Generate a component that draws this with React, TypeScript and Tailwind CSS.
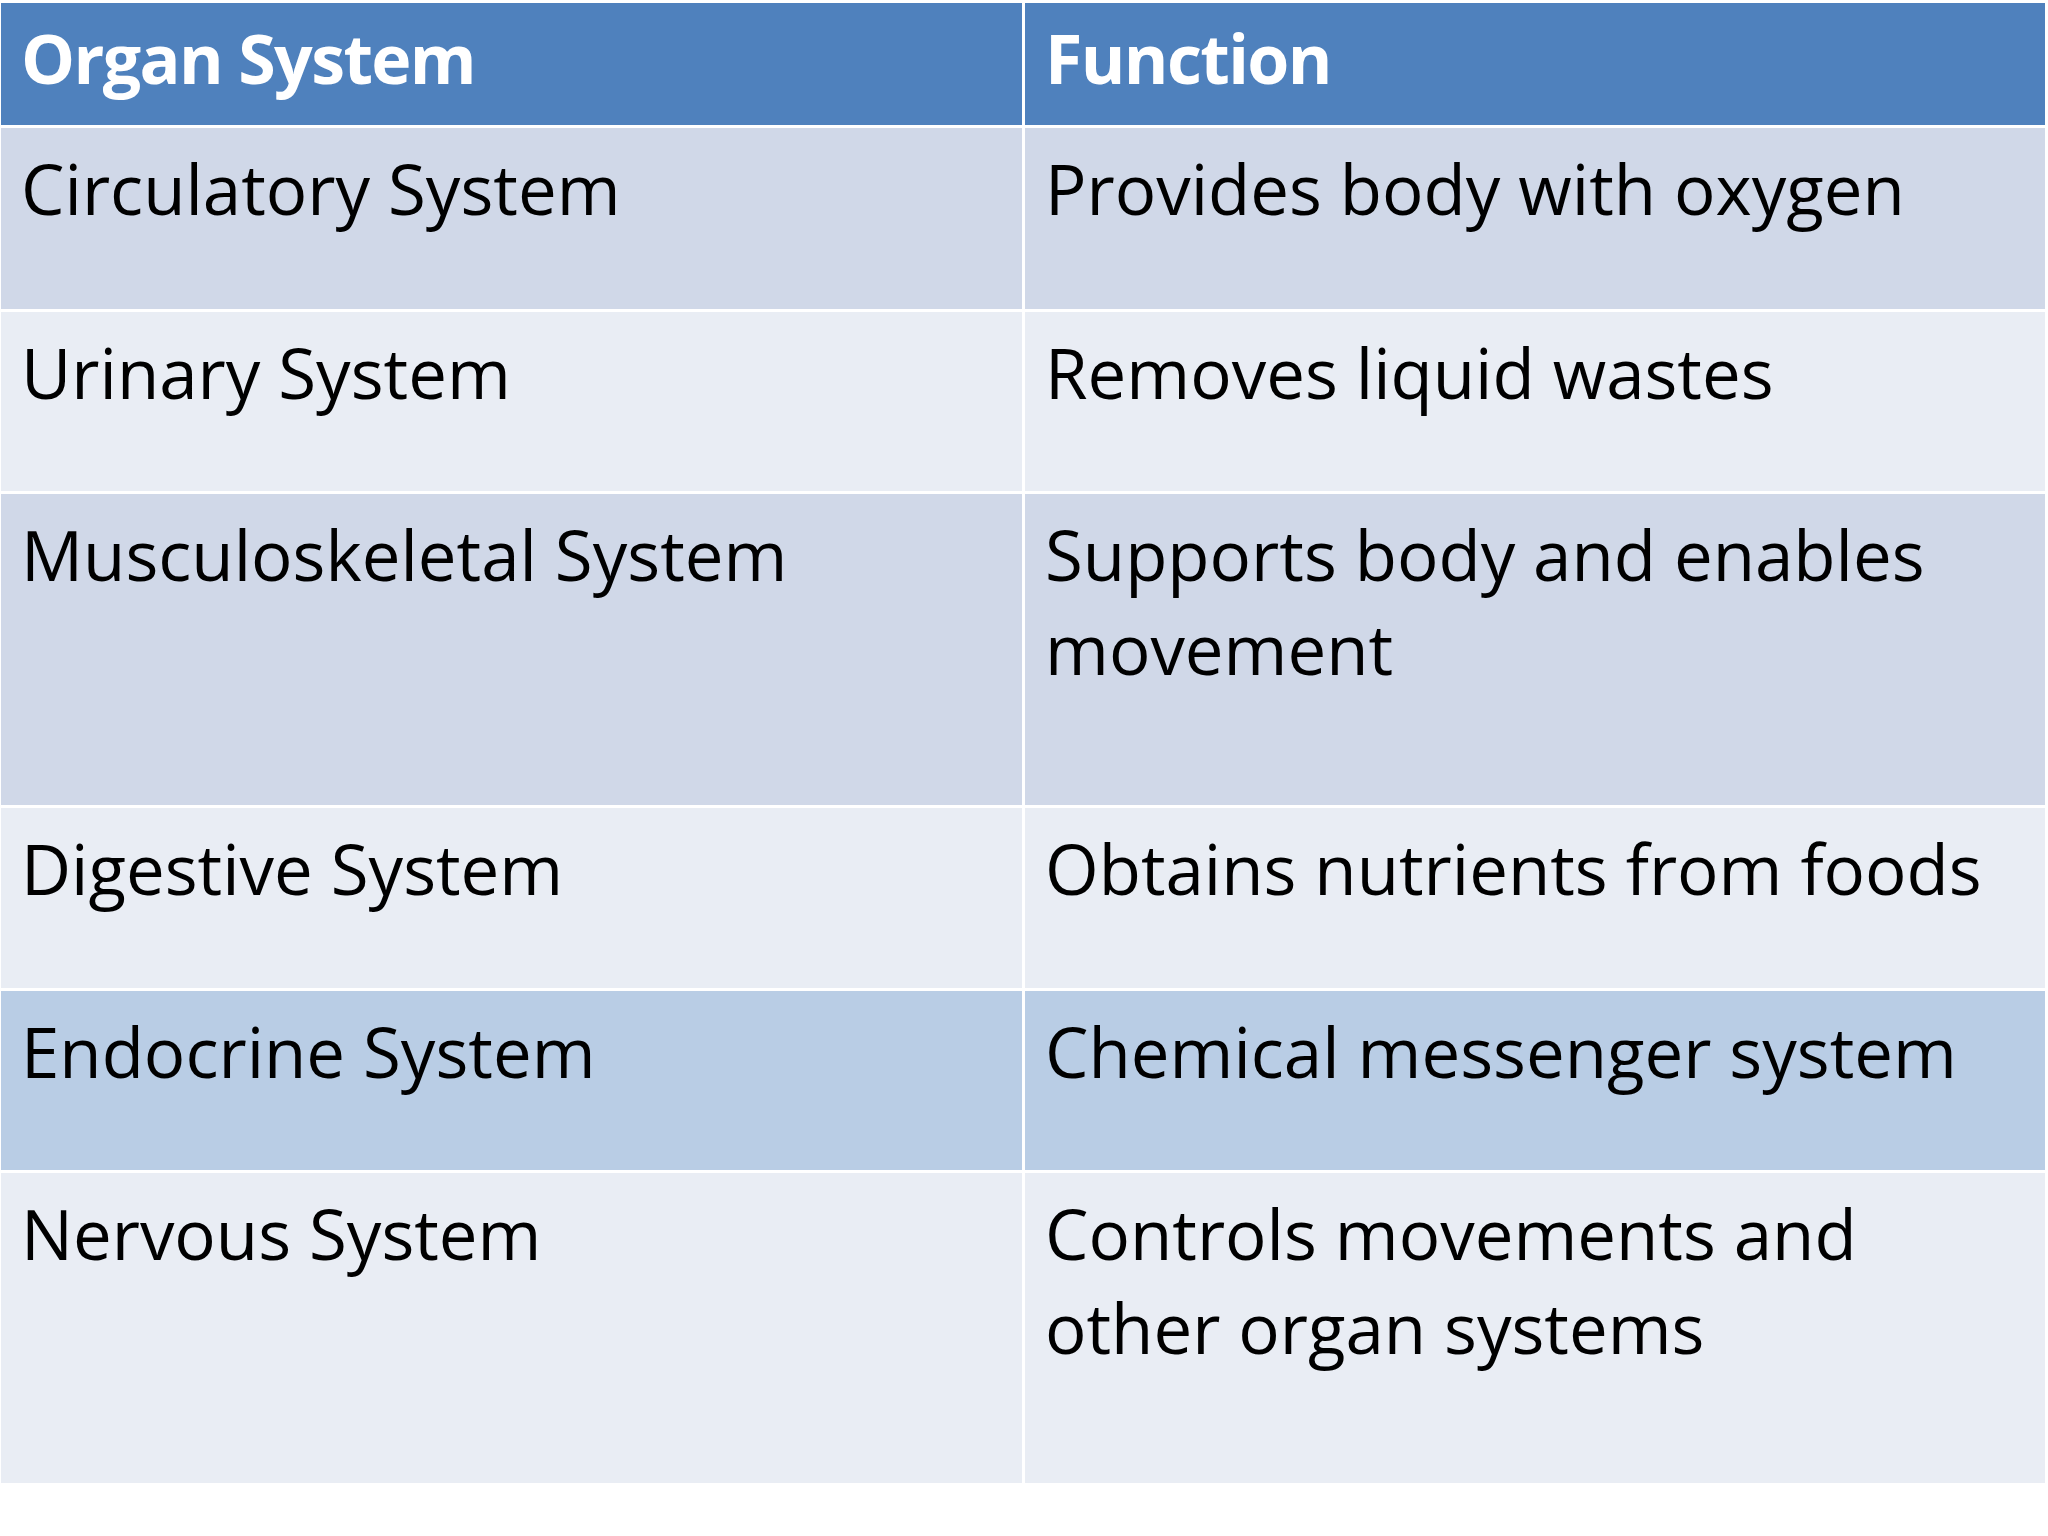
import React from "react";

type Row = { organ: string; fn: React.ReactNode; h: string; bg: string };

const rows: Row[] = [
  { organ: "Circulatory System", fn: "Provides body with oxygen", h: "h-[181px]", bg: "bg-[#d0d8e8]" },
  { organ: "Urinary System", fn: "Removes liquid wastes", h: "h-[179px]", bg: "bg-[#e9edf4]" },
  {
    organ: "Musculoskeletal System",
    fn: (
      <>
        Supports body and enables
        <br />
        movement
      </>
    ),
    h: "h-[311px]",
    bg: "bg-[#d0d8e8]",
  },
  { organ: "Digestive System", fn: "Obtains nutrients from foods", h: "h-[180px]", bg: "bg-[#e9edf4]" },
  { organ: "Endocrine System", fn: "Chemical messenger system", h: "h-[179px]", bg: "bg-[#b9cde5]" },
  {
    organ: "Nervous System",
    fn: (
      <>
        Controls movements and
        <br />
        other organ systems
      </>
    ),
    h: "h-[310px]",
    bg: "bg-[#e9edf4]",
  },
];

export default function App() {
  return (
    <div
      className="w-[2048px] h-[1536px] bg-white pt-[3px] pl-[1px]"
      style={{ fontFamily: '"Open Sans", "Noto Sans", sans-serif' }}
    >
      <div className="w-[2044px] flex flex-col gap-[3px]">
        <div className="h-[122px] grid grid-cols-[1021px_1020px] gap-[3px]">
          <div className="bg-[#4f81bd] pl-[20px] pt-[8px] text-[68px] leading-[94px] tracking-[-1.6px] font-bold text-white">
            Organ System
          </div>
          <div className="bg-[#4f81bd] pl-[20px] pt-[8px] text-[68px] leading-[94px] tracking-[-1.6px] font-bold text-white">
            Function
          </div>
        </div>
        {rows.map((r, i) => (
          <div key={i} className={`${r.h} grid grid-cols-[1021px_1020px] gap-[3px]`}>
            <div className={`${r.bg} pl-[20px] pt-[13px] text-[69px] leading-[94px] text-black`}>{r.organ}</div>
            <div className={`${r.bg} pl-[20px] pt-[13px] text-[69px] leading-[94px] text-black`}>{r.fn}</div>
          </div>
        ))}
      </div>
    </div>
  );
}
